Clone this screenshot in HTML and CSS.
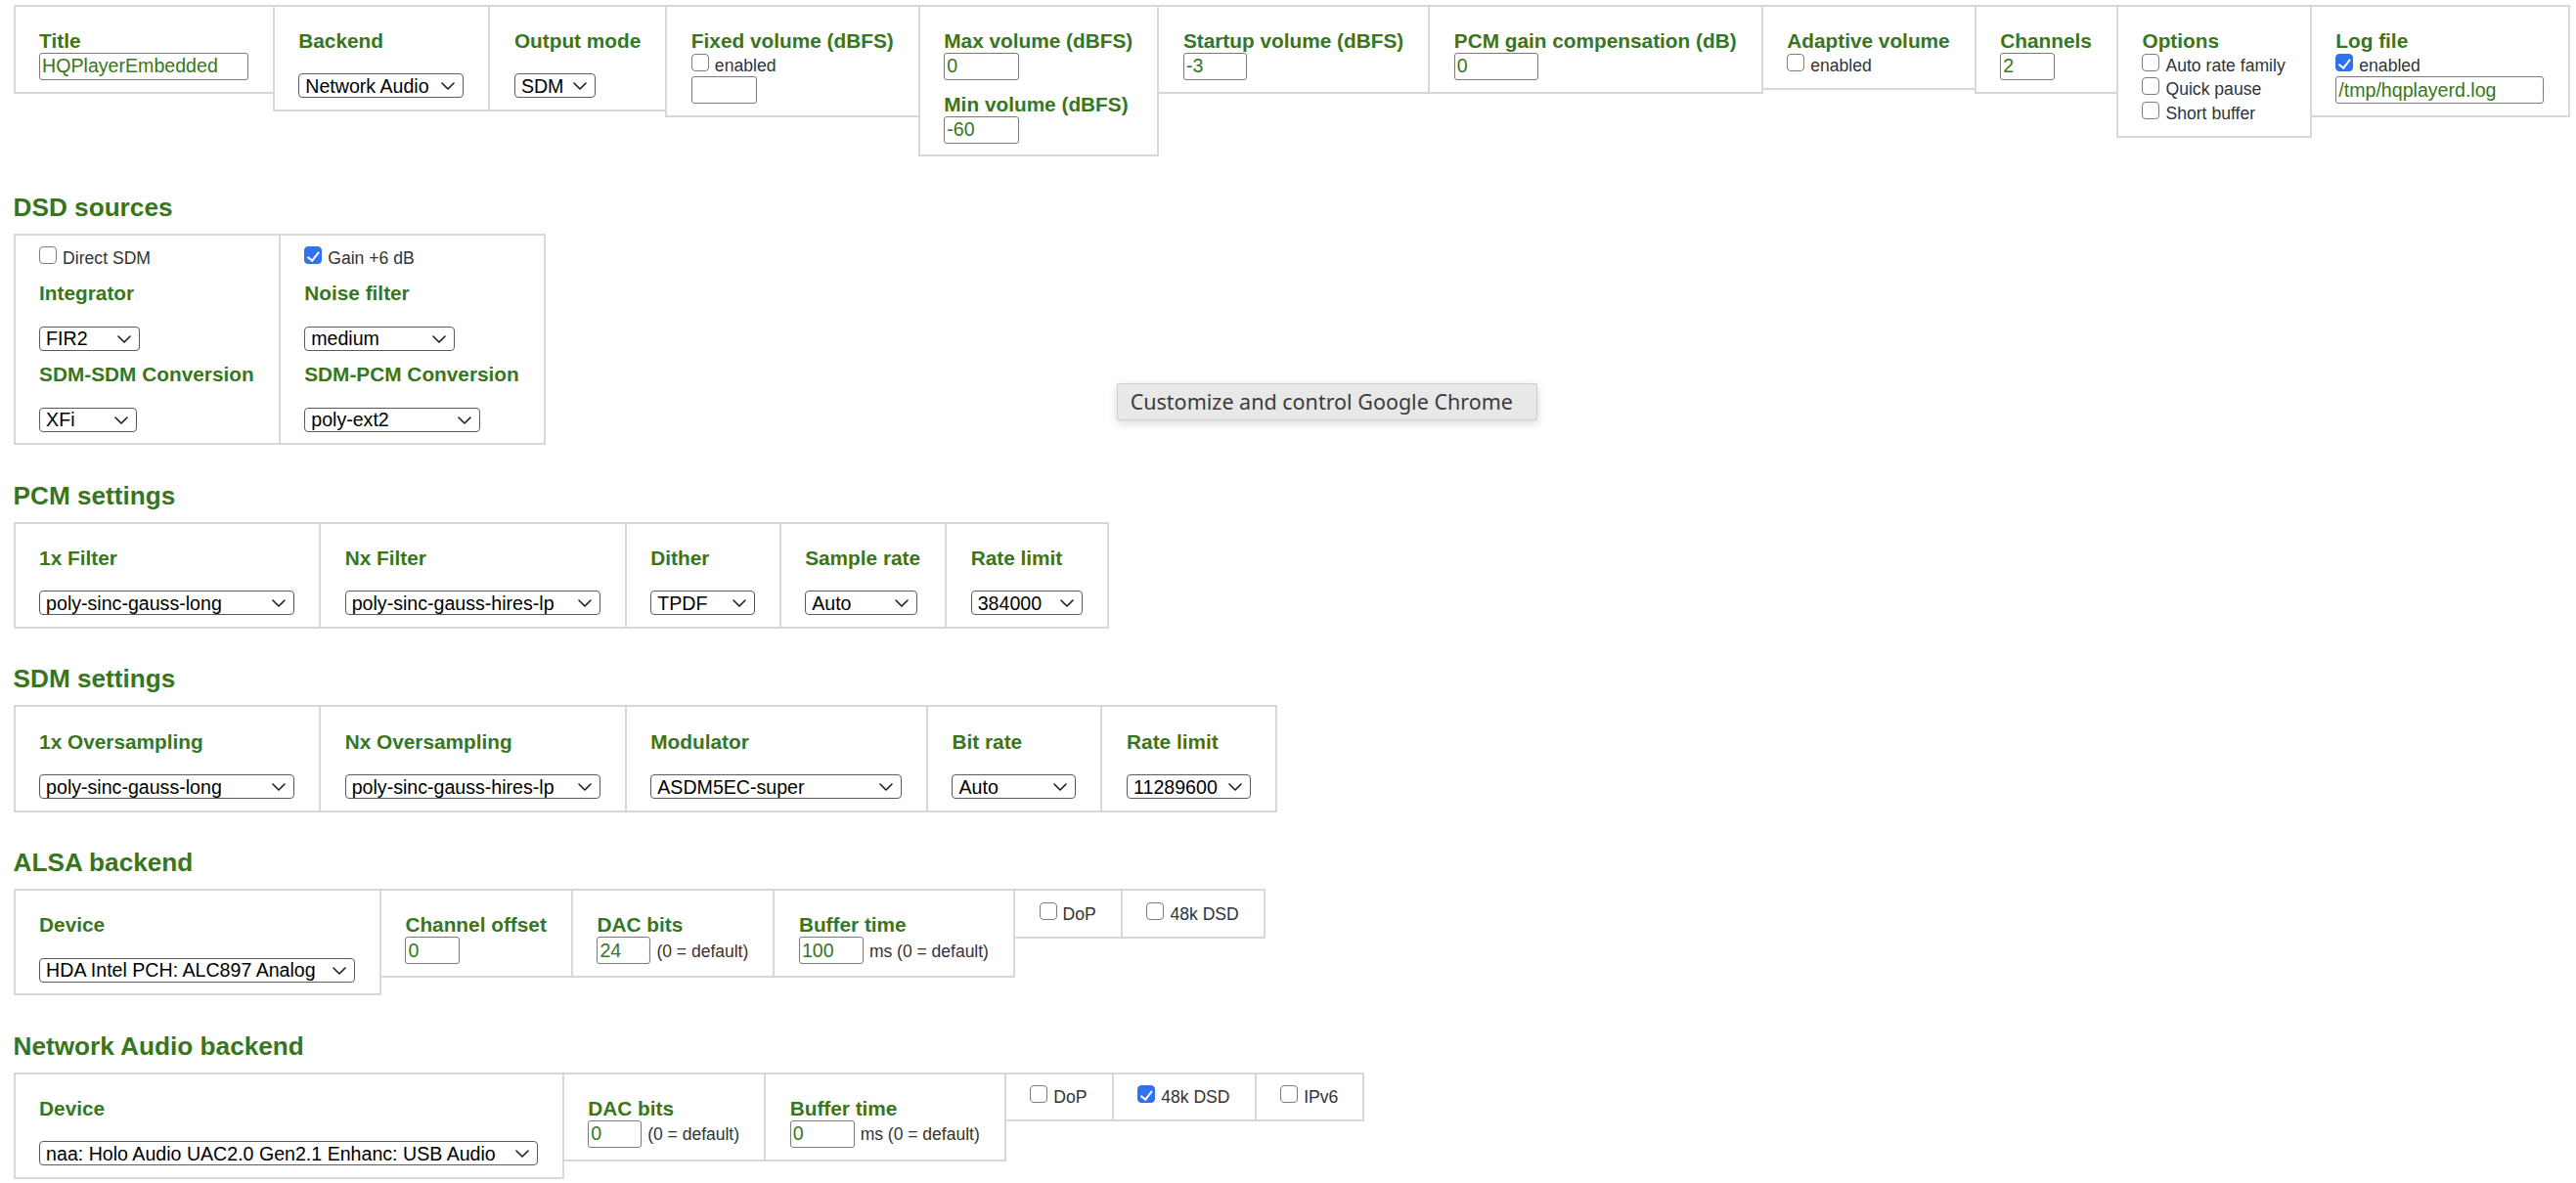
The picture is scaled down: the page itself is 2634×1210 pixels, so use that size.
FILE: index.html
```html
<!DOCTYPE html>
<html lang="en">
<head>
<meta charset="utf-8">
<title>HQPlayer Embedded settings</title>
<link rel="stylesheet" href="styles.css">
</head>
<body>
<div class="page">

  <div class="row">
    <div class="cell">
      <div class="lbl">Title</div>
      <input class="txt w-title" type="text" value="HQPlayerEmbedded">
    </div>
    <div class="cell">
      <div class="lbl">Backend</div>
      <span class="sel w-backend"><select><option>Network Audio</option><option>ALSA</option></select><svg class="chev" viewBox="0 0 14 8"><path d="M1 1L7 7L13 1"/></svg></span>
    </div>
    <div class="cell">
      <div class="lbl">Output mode</div>
      <span class="sel w-outmode"><select><option>SDM</option><option>PCM</option></select><svg class="chev" viewBox="0 0 14 8"><path d="M1 1L7 7L13 1"/></svg></span>
    </div>
    <div class="cell">
      <div class="lbl">Fixed volume (dBFS)</div>
      <label class="chk"><input type="checkbox"><span>enabled</span></label>
      <input class="txt w-fixed" type="text" value="">
    </div>
    <div class="cell">
      <div class="lbl">Max volume (dBFS)</div>
      <input class="txt w-vol" type="text" value="0">
      <div class="lbl">Min volume (dBFS)</div>
      <input class="txt w-vol" type="text" value="-60">
    </div>
    <div class="cell">
      <div class="lbl">Startup volume (dBFS)</div>
      <input class="txt w-startup" type="text" value="-3">
    </div>
    <div class="cell">
      <div class="lbl">PCM gain compensation (dB)</div>
      <input class="txt w-gain" type="text" value="0">
    </div>
    <div class="cell">
      <div class="lbl">Adaptive volume</div>
      <label class="chk"><input type="checkbox"><span>enabled</span></label>
    </div>
    <div class="cell">
      <div class="lbl">Channels</div>
      <input class="txt w-small" type="text" value="2">
    </div>
    <div class="cell">
      <div class="lbl">Options</div>
      <label class="chk"><input type="checkbox"><span>Auto rate family</span></label>
      <label class="chk"><input type="checkbox"><span>Quick pause</span></label>
      <label class="chk"><input type="checkbox"><span>Short buffer</span></label>
    </div>
    <div class="cell">
      <div class="lbl">Log file</div>
      <label class="chk"><input type="checkbox" checked><span>enabled</span></label>
      <input class="txt w-log" type="text" value="/tmp/hqplayerd.log">
    </div>
  </div>

  <h3 class="sec">DSD sources</h3>
  <div class="row">
    <div class="cell">
      <label class="chk"><input type="checkbox"><span>Direct SDM</span></label>
      <div class="lbl">Integrator</div>
      <span class="sel w-fir2"><select><option>FIR2</option><option>IIR</option></select><svg class="chev" viewBox="0 0 14 8"><path d="M1 1L7 7L13 1"/></svg></span>
      <div class="lbl">SDM-SDM Conversion</div>
      <span class="sel w-xfi"><select><option>XFi</option><option>none</option></select><svg class="chev" viewBox="0 0 14 8"><path d="M1 1L7 7L13 1"/></svg></span>
    </div>
    <div class="cell">
      <label class="chk"><input type="checkbox" checked><span>Gain +6 dB</span></label>
      <div class="lbl">Noise filter</div>
      <span class="sel w-medium"><select><option>medium</option><option>low</option><option>high</option></select><svg class="chev" viewBox="0 0 14 8"><path d="M1 1L7 7L13 1"/></svg></span>
      <div class="lbl">SDM-PCM Conversion</div>
      <span class="sel w-polyext"><select><option>poly-ext2</option><option>poly-ext</option></select><svg class="chev" viewBox="0 0 14 8"><path d="M1 1L7 7L13 1"/></svg></span>
    </div>
  </div>

  <h3 class="sec">PCM settings</h3>
  <div class="row">
    <div class="cell">
      <div class="lbl">1x Filter</div>
      <span class="sel w-filter"><select><option>poly-sinc-gauss-long</option></select><svg class="chev" viewBox="0 0 14 8"><path d="M1 1L7 7L13 1"/></svg></span>
    </div>
    <div class="cell">
      <div class="lbl">Nx Filter</div>
      <span class="sel w-filter"><select><option>poly-sinc-gauss-hires-lp</option></select><svg class="chev" viewBox="0 0 14 8"><path d="M1 1L7 7L13 1"/></svg></span>
    </div>
    <div class="cell">
      <div class="lbl">Dither</div>
      <span class="sel w-dither"><select><option>TPDF</option><option>NS1</option></select><svg class="chev" viewBox="0 0 14 8"><path d="M1 1L7 7L13 1"/></svg></span>
    </div>
    <div class="cell">
      <div class="lbl">Sample rate</div>
      <span class="sel w-srate"><select><option>Auto</option></select><svg class="chev" viewBox="0 0 14 8"><path d="M1 1L7 7L13 1"/></svg></span>
    </div>
    <div class="cell">
      <div class="lbl">Rate limit</div>
      <span class="sel w-rlim"><select><option>384000</option></select><svg class="chev" viewBox="0 0 14 8"><path d="M1 1L7 7L13 1"/></svg></span>
    </div>
  </div>

  <h3 class="sec">SDM settings</h3>
  <div class="row">
    <div class="cell">
      <div class="lbl">1x Oversampling</div>
      <span class="sel w-filter"><select><option>poly-sinc-gauss-long</option></select><svg class="chev" viewBox="0 0 14 8"><path d="M1 1L7 7L13 1"/></svg></span>
    </div>
    <div class="cell">
      <div class="lbl">Nx Oversampling</div>
      <span class="sel w-filter"><select><option>poly-sinc-gauss-hires-lp</option></select><svg class="chev" viewBox="0 0 14 8"><path d="M1 1L7 7L13 1"/></svg></span>
    </div>
    <div class="cell">
      <div class="lbl">Modulator</div>
      <span class="sel w-mod"><select><option>ASDM5EC-super</option></select><svg class="chev" viewBox="0 0 14 8"><path d="M1 1L7 7L13 1"/></svg></span>
    </div>
    <div class="cell">
      <div class="lbl">Bit rate</div>
      <span class="sel w-bitrate"><select><option>Auto</option></select><svg class="chev" viewBox="0 0 14 8"><path d="M1 1L7 7L13 1"/></svg></span>
    </div>
    <div class="cell">
      <div class="lbl">Rate limit</div>
      <span class="sel w-rlim2"><select><option>11289600</option></select><svg class="chev" viewBox="0 0 14 8"><path d="M1 1L7 7L13 1"/></svg></span>
    </div>
  </div>

  <h3 class="sec">ALSA backend</h3>
  <div class="row">
    <div class="cell">
      <div class="lbl">Device</div>
      <span class="sel w-alsa"><select><option>HDA Intel PCH: ALC897 Analog</option></select><svg class="chev" viewBox="0 0 14 8"><path d="M1 1L7 7L13 1"/></svg></span>
    </div>
    <div class="cell">
      <div class="lbl">Channel offset</div>
      <input class="txt w-small" type="text" value="0">
    </div>
    <div class="cell">
      <div class="lbl">DAC bits</div>
      <div class="inl"><input class="txt w-dac" type="text" value="24"><span>(0 = default)</span></div>
    </div>
    <div class="cell">
      <div class="lbl">Buffer time</div>
      <div class="inl"><input class="txt w-buf" type="text" value="100"><span>ms (0 = default)</span></div>
    </div>
    <div class="cell">
      <label class="chk"><input type="checkbox"><span>DoP</span></label>
    </div>
    <div class="cell">
      <label class="chk"><input type="checkbox"><span>48k DSD</span></label>
    </div>
  </div>

  <h3 class="sec">Network Audio backend</h3>
  <div class="row">
    <div class="cell">
      <div class="lbl">Device</div>
      <span class="sel w-naa"><select><option>naa: Holo Audio UAC2.0 Gen2.1 Enhanc: USB Audio</option></select><svg class="chev" viewBox="0 0 14 8"><path d="M1 1L7 7L13 1"/></svg></span>
    </div>
    <div class="cell">
      <div class="lbl">DAC bits</div>
      <div class="inl"><input class="txt w-dac" type="text" value="0"><span>(0 = default)</span></div>
    </div>
    <div class="cell">
      <div class="lbl">Buffer time</div>
      <div class="inl"><input class="txt w-buf" type="text" value="0"><span>ms (0 = default)</span></div>
    </div>
    <div class="cell">
      <label class="chk"><input type="checkbox"><span>DoP</span></label>
    </div>
    <div class="cell">
      <label class="chk"><input type="checkbox" checked><span>48k DSD</span></label>
    </div>
    <div class="cell">
      <label class="chk"><input type="checkbox"><span>IPv6</span></label>
    </div>
  </div>

</div>

<div class="tooltip">Customize and control Google Chrome</div>
</body>
</html>
```

FILE: styles.css
```css
html {
  background: #fff;
}

body {
  margin: 0;
  font-family: "Liberation Sans", Arial, sans-serif;
  color: #000;
}

.page {
  padding: 4.7px 0 0 13.5px;
}

.row {
  display: flex;
  flex-wrap: nowrap;
  align-items: flex-start;
}

.cell {
  flex: none;
  border: 2px solid #d8d8d8;
  padding: 10.7px 25px 11.6px 24.6px;
  margin-left: -2px;
}

.cell:first-child {
  margin-left: 0;
}

.lbl {
  margin-top: 12.6px;
  font-size: 20.8px;
  line-height: 24px;
  font-weight: bold;
  color: #38761d;
  white-space: nowrap;
}

.sec {
  margin: 36.4px 0 12px;
  font-size: 26.2px;
  line-height: 30px;
  font-weight: bold;
  color: #38761d;
}

/* text inputs */
.txt {
  display: block;
  box-sizing: border-box;
  height: 28px;
  margin: 0;
  padding: 0 2px;
  border: 1px solid #7a7a7a;
  border-radius: 3px;
  background: #fff;
  font-family: "Liberation Sans", Arial, sans-serif;
  font-size: 19.6px;
  color: #38761d;
  outline: none;
}

.w-title { width: 213.6px; }
.w-fixed { width: 67px; }
.w-vol { width: 76.5px; }
.w-startup { width: 65px; }
.w-gain { width: 86px; }
.w-small { width: 56px; }
.w-log { width: 213px; }
.w-dac { width: 55px; }
.w-buf { width: 66px; }

/* selects */
.sel {
  display: block;
  position: relative;
  height: 25px;
  margin-top: 21.4px;
}

.sel select {
  appearance: none;
  -webkit-appearance: none;
  box-sizing: border-box;
  display: block;
  width: 100%;
  height: 25px;
  margin: 0;
  padding: 0 26px 0 6px;
  border: 1px solid #5c5c5c;
  border-radius: 4px;
  background: #fff;
  font-family: "Liberation Sans", Arial, sans-serif;
  font-size: 19.6px;
  color: #000;
  outline: none;
}

.chev {
  position: absolute;
  right: 9px;
  top: 9px;
  width: 14px;
  height: 8px;
  pointer-events: none;
}

.chev path {
  fill: none;
  stroke: #1e1e1e;
  stroke-width: 1.6;
  stroke-linecap: round;
  stroke-linejoin: round;
}

.w-backend { width: 169px; }
.w-outmode { width: 83.2px; }
.w-fir2 { width: 103px; }
.w-xfi { width: 99.6px; }
.w-medium { width: 154px; }
.w-polyext { width: 180px; }
.w-filter { width: 261px; }
.w-dither { width: 106.3px; }
.w-srate { width: 115.2px; }
.w-rlim { width: 114.4px; }
.w-mod { width: 256.6px; }
.w-bitrate { width: 127px; }
.w-rlim2 { width: 126.6px; }
.w-alsa { width: 322.7px; }
.w-naa { width: 509.5px; }

/* checkbox lines */
.chk {
  display: flex;
  align-items: flex-start;
  height: 24.5px;
  white-space: nowrap;
}

.chk input {
  appearance: none;
  -webkit-appearance: none;
  position: relative;
  flex: none;
  box-sizing: border-box;
  width: 18px;
  height: 18px;
  margin: 1px 6px 0 0;
  border: 1px solid #7d7d7d;
  border-radius: 4px;
  background: #fff;
}

.chk input:checked {
  background: #2f72ef;
  border-color: #2f72ef;
}

.chk input:checked::after {
  content: "";
  position: absolute;
  left: 5.2px;
  top: 1.6px;
  width: 4.6px;
  height: 9.6px;
  border: solid #fff;
  border-width: 0 2.6px 2.6px 0;
  transform: rotate(38deg);
}

.chk span {
  margin-top: 3px;
  font-size: 17.6px;
  line-height: 20px;
  color: #333;
}

/* input followed by a note */
.inl {
  display: flex;
  align-items: baseline;
  gap: 6px;
  white-space: nowrap;
}

.inl span {
  font-size: 17.5px;
  color: #333;
}

/* browser tooltip overlay */
.tooltip {
  position: absolute;
  left: 1141.7px;
  top: 391.7px;
  box-sizing: border-box;
  width: 430.6px;
  height: 38.3px;
  padding: 0 13px;
  display: flex;
  align-items: center;
  background: #e7e8e7;
  border: 1px solid #cdcdcd;
  border-radius: 2px;
  box-shadow: 0 3px 10px rgba(0, 0, 0, 0.16);
  font-family: "Noto Sans", "Liberation Sans", sans-serif;
  font-size: 21.5px;
  color: #3c3c3c;
  white-space: nowrap;
}
```
